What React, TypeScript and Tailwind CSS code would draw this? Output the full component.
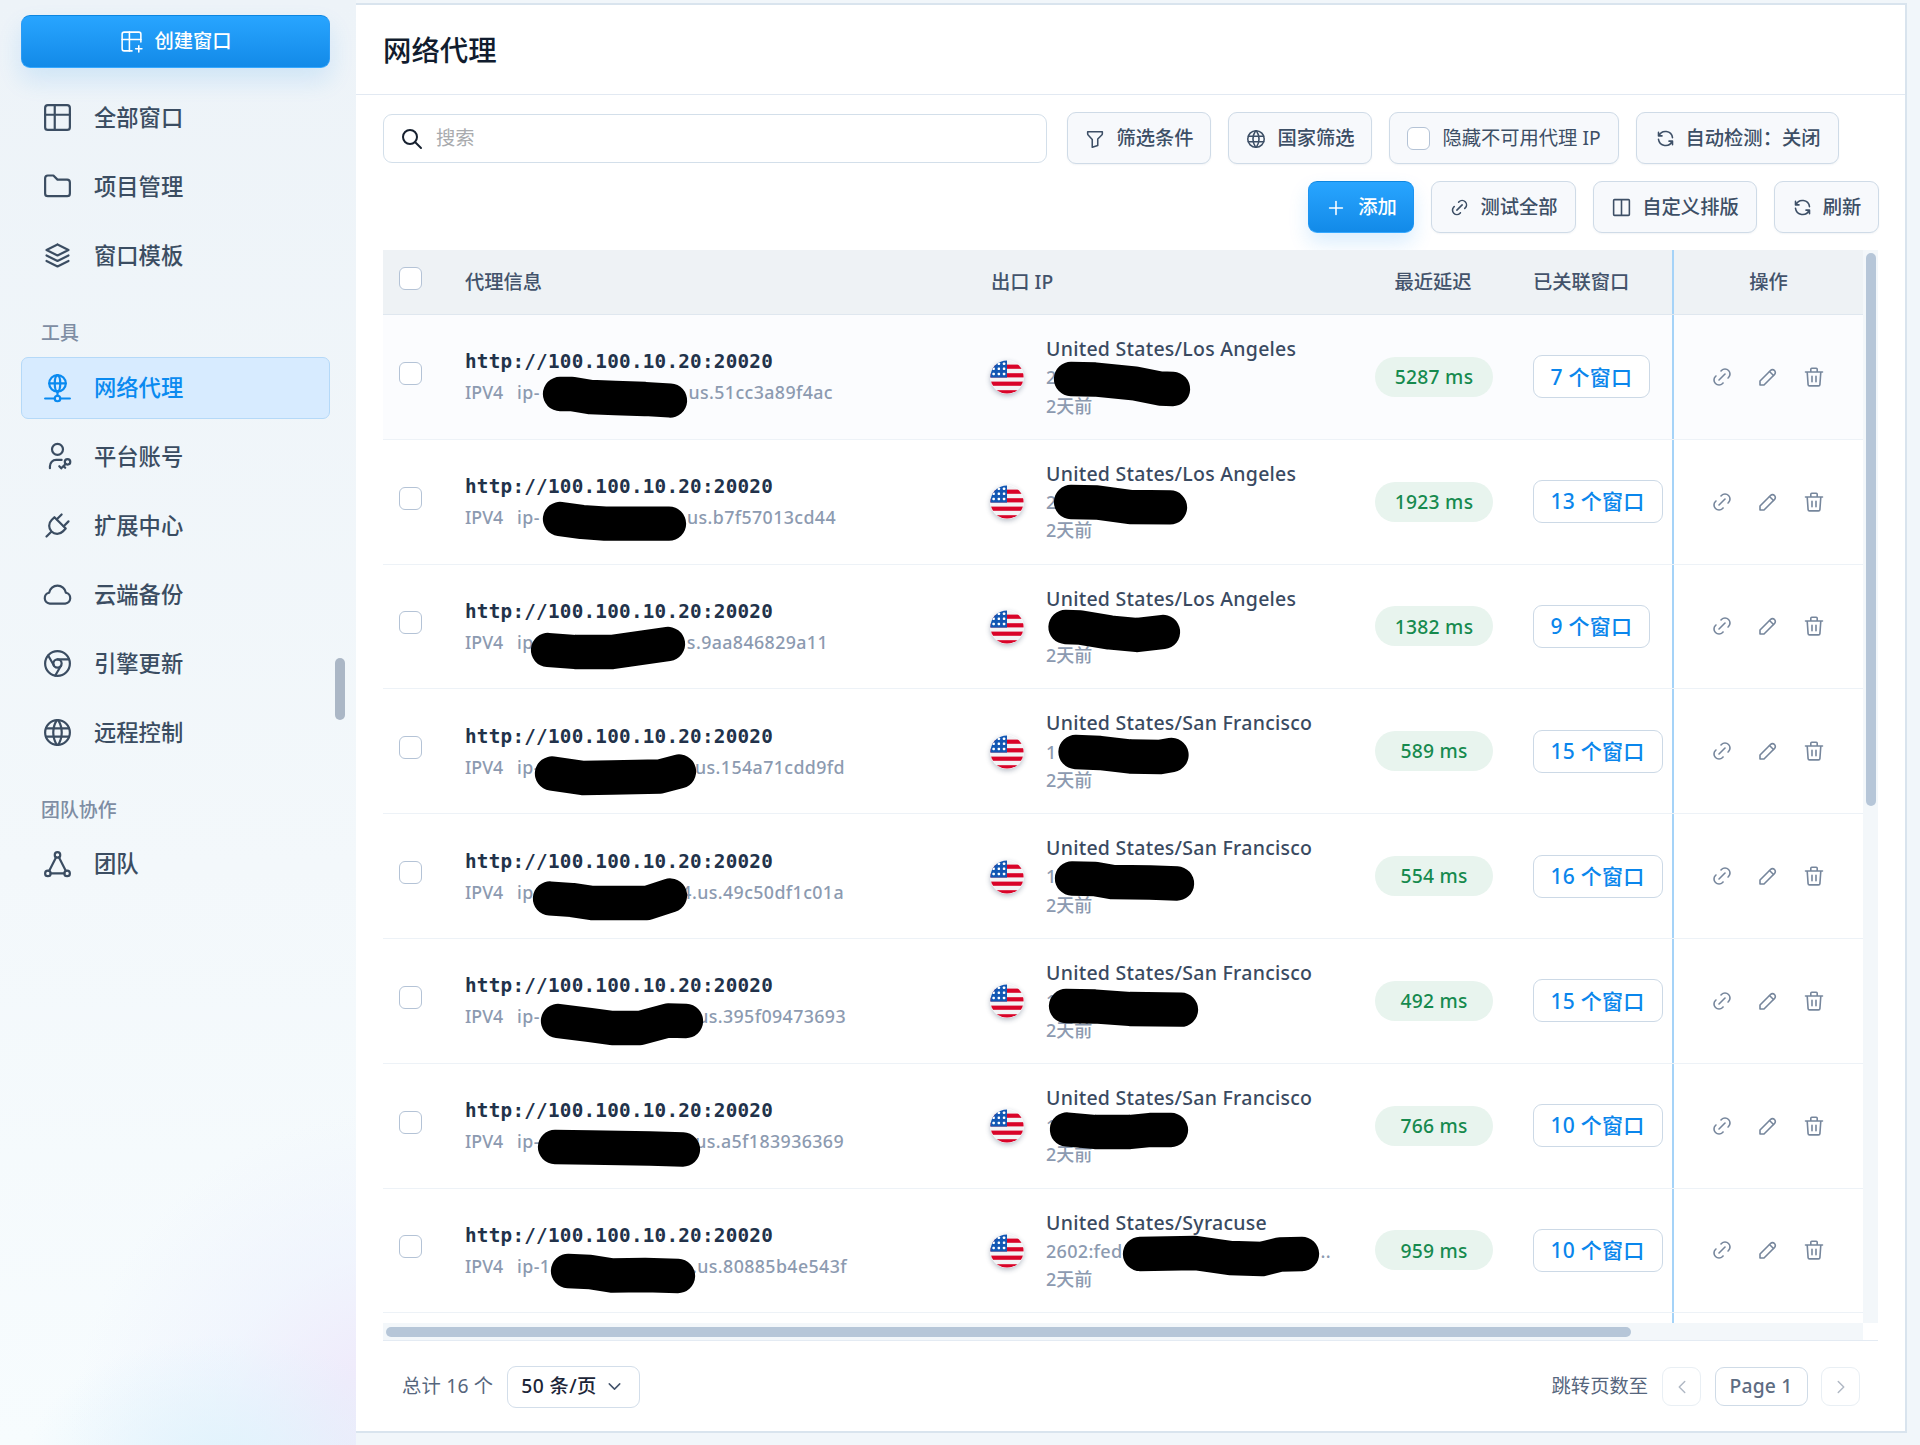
import React from 'react';
import {
  TbBrandChrome, TbChevronDown, TbChevronLeft, TbChevronRight, TbColumns2, TbFilter, TbFolder, TbLink, TbNetwork,
  TbPencil, TbPlug, TbPlus, TbRefresh, TbSearch, TbStack2, TbTable, TbTablePlus, TbWorld,
} from 'react-icons/tb';

const SVG = { viewBox: '0 0 24 24', fill: 'none', stroke: 'currentColor', strokeLinecap: 'round', strokeLinejoin: 'round' } as const;

interface IconProps { size?: number; strokeWidth?: number; className?: string; }

function UserKey({ size = 33 }: IconProps) {
  return <svg {...SVG} width={size} height={size} strokeWidth={1.6}>
    <circle cx="12" cy="6.8" r="4" />
    <path d="M6.5 20.5v-1.5a4.5 4.5 0 0 1 4.5-4.5h4" />
    <circle cx="19.3" cy="15.9" r="2" />
    <path d="M17.9 17.4l-3.2 3.2M16.4 18.9l1.2 1.3M14.7 20.6l-1.4-1.5" />
  </svg>;
}

function CloudIcon({ size = 33 }: IconProps) {
  return <svg {...SVG} width={size} height={size} strokeWidth={1.6}>
    <path d="M6.4 18.6a4 4 0 0 1-.5-7.9a6.2 6.2 0 0 1 12.2 0a4 4 0 0 1-.5 7.9z" />
  </svg>;
}

function TeamIcon({ size = 33 }: IconProps) {
  return <svg {...SVG} width={size} height={size} strokeWidth={1.6}>
    <circle cx="12" cy="5" r="2" /><circle cx="5" cy="18.5" r="2" /><circle cx="19" cy="18.5" r="2" />
    <path d="M7 18.5h10M11 6.8l-5.1 9.9M13 6.8l5.1 9.9" />
  </svg>;
}

function TrashIcon({ size = 24 }: IconProps) {
  return <svg {...SVG} width={size} height={size} strokeWidth={1.6}>
    <path d="M3.5 7h17M5.2 7l.9 12.6a1.4 1.4 0 0 0 1.4 1.3h9a1.4 1.4 0 0 0 1.4-1.3L18.8 7M8.8 7V4.2a1 1 0 0 1 1-1h4.4a1 1 0 0 1 1 1V7M10 11.2v5.6M14 11.2v5.6" />
  </svg>;
}

function Flag() {
  return <div className="size-[34px] shrink-0 rounded-full shadow-[0_2px_5px_rgba(30,50,80,0.3)]">
    <svg width="34" height="34" viewBox="0 0 34 34">
      <clipPath id="flag-round"><circle cx="17" cy="17" r="16.6" /></clipPath>
      <g clipPath="url(#flag-round)">
        <rect width="34" height="34" fill="#f3f3f5" />
        {[4.6, 13.2, 21.6, 30.2].map(y => <rect key={y} y={y} width="34" height="4.2" fill="#d90429" />)}
        <rect width="17" height="17.6" fill="#1257b4" />
        {[2.5, 7.6, 12.7].map(y => [2.4, 7.6, 12.8].map(x => <rect key={x + '-' + y} x={x} y={y} width="2.5" height="2.5" rx="0.8" fill="#fff" />))}
      </g>
    </svg>
  </div>;
}

const MAIN_NAV = [
  { label: '全部窗口', Icon: TbTable },
  { label: '项目管理', Icon: TbFolder },
  { label: '窗口模板', Icon: TbStack2 },
];
const TOOLS = [
  { label: '网络代理', Icon: TbNetwork, active: true },
  { label: '平台账号', Icon: UserKey },
  { label: '扩展中心', Icon: TbPlug },
  { label: '云端备份', Icon: CloudIcon },
  { label: '引擎更新', Icon: TbBrandChrome },
  { label: '远程控制', Icon: TbWorld },
];
const TEAM = [{ label: '团队', Icon: TeamIcon }];

// width = full length of the sub line, the head and the tail sit at its two ends
interface Row { head: string; tail: string; width: number; city: string; ip: string; ipEnd?: string; ms: number; wins: number; }
const ROWS: Row[] = [
  { head: 'ip-', tail: 'us.51cc3a89f4ac', width: 368, city: 'Los Angeles', ip: '2', ms: 5287, wins: 7 },
  { head: 'ip-', tail: 'us.b7f57013cd44', width: 371, city: 'Los Angeles', ip: '2', ms: 1923, wins: 13 },
  { head: 'ip', tail: 's.9aa846829a11', width: 363, city: 'Los Angeles', ip: '', ms: 1382, wins: 9 },
  { head: 'ip-', tail: '.us.154a71cdd9fd', width: 380, city: 'San Francisco', ip: '1', ms: 589, wins: 15 },
  { head: 'ip-', tail: '4.us.49c50df1c01a', width: 379, city: 'San Francisco', ip: '1', ms: 554, wins: 16 },
  { head: 'ip-', tail: 'us.395f09473693', width: 381, city: 'San Francisco', ip: '1', ms: 492, wins: 15 },
  { head: 'ip-', tail: 'us.a5f183936369', width: 379, city: 'San Francisco', ip: '1', ms: 766, wins: 10 },
  { head: 'ip-1', tail: '.us.80885b4e543f', width: 382, city: 'Syracuse', ip: '2602:fed', ipEnd: '..', ms: 959, wins: 10 },
];

// marker strokes over the private parts of the addresses
const STROKES = [
  '560,394 572,394 590,397 615,398 645,399 670,400.5',
  '560,519 582,522 605,523.7 669,523.7',
  '548,650 575,652 612,652 640,648 668,644',
  '552,773.5 583,778 612,777.5 660,776.5 679,771.5',
  '550,898.5 572,900 592,903 647,903 670,895.5',
  '558,1021 590,1025 612,1028 640,1028 668,1020.5 686,1021',
  '555,1147 590,1147.5 650,1148.5 683,1149.5',
  '568,1271 590,1272 612,1275.5 645,1275 678,1276',
  '1071,379 1095,379.5 1135,383.5 1160,388.5 1173,389',
  '1071,502 1097,502.5 1130,507 1170,507.4',
  '1065.5,627 1080,627.5 1110,632.5 1137,635 1163,632',
  '1075.5,752 1100,753 1130,756.5 1160,757 1171.5,755',
  '1072,878.5 1095,879 1112,882 1150,882.5 1177,883.5',
  '1066,1006 1095,1006.5 1130,1009 1181,1009.7',
  '1067,1129.5 1095,1132 1130,1132 1150,1130 1171,1130',
  '1140,1254 1195,1253 1230,1258 1262,1259 1280,1254.5 1302,1254',
];

function Checkbox({ className = '' }: { className?: string }) {
  return <span className={'block size-[23px] shrink-0 rounded-[6px] border-[1.5px] border-[#b4c3d6] bg-white ' + className} />;
}

function NavItem({ label, Icon, active = false }: { label: string; Icon: React.ComponentType<IconProps>; active?: boolean }) {
  return <div className={`flex h-[62px] items-center gap-[20px] rounded-[7px] border-[1.5px] pl-[19px] text-[22.3px] font-medium ${active ? 'border-[#b5d9f8] bg-[#d7ebff] text-[#0a8af0]' : 'border-transparent text-[#3b4d62]'}`}>
    <Icon size={33} strokeWidth={1.6} />
    <span>{label}</span>
  </div>;
}

function ToolButton({ children, className = '' }: { children: React.ReactNode; className?: string }) {
  return <button className={'flex h-[52px] items-center justify-center gap-[10px] rounded-[9px] border-[1.5px] border-[#cfdbe7] bg-[#f7f9fc] pt-[1px] text-[19.3px] text-[#3d4f66] shadow-[0_1px_2px_rgba(30,60,100,0.06)] ' + className}>{children}</button>;
}

export default function App() {
  return <div className="flex h-[1445px] w-[1920px] overflow-hidden bg-[#f1f6fa] font-['Noto_Sans','Noto_Sans_CJK_SC',sans-serif] text-[#33475c]">
    <aside className="relative w-[356px] shrink-0 bg-[radial-gradient(ellipse_200px_130px_at_225px_1465px,#e0f3fc_0,rgba(224,243,252,0)_100%),radial-gradient(circle_at_400px_1440px,#efe9fa_0,#efebfb_80px,rgba(236,240,253,0.55)_190px,rgba(240,245,253,0)_330px),linear-gradient(180deg,#edf3f8_0,#f3f8fb_60%,#f7fcfe_100%)] px-[21px] pt-[14.5px]">
      <button className="flex h-[53px] w-[309px] items-center justify-center gap-[10px] rounded-[9px] border border-t-[#0d86e0] border-x-[#2a9bf5] border-b-[#35a8ff] bg-linear-to-b from-[#28a5ff] to-[#128ae8] pt-[1px] text-[19.3px] font-medium text-white shadow-[0_12px_24px_rgba(24,144,240,0.14)]">
        <TbTablePlus size={25} strokeWidth={1.5} />创建窗口
      </button>
      <nav className="mt-[19px] flex w-[309px] flex-col gap-[7px]">
        {MAIN_NAV.map(n => <NavItem key={n.label} {...n} />)}
      </nav>
      <div className="mt-[32.5px] h-[28px] pl-[20px] text-[18.9px] font-medium leading-[28px] text-[#7e8da3]">工具</div>
      <nav className="mt-[9.5px] flex w-[309px] flex-col gap-[7px]">
        {TOOLS.map(n => <NavItem key={n.label} {...n} />)}
      </nav>
      <div className="mt-[32px] h-[28px] pl-[20px] text-[18.9px] font-medium leading-[28px] text-[#7e8da3]">团队协作</div>
      <nav className="mt-[9.5px] flex w-[309px] flex-col gap-[7px]">
        {TEAM.map(n => <NavItem key={n.label} {...n} />)}
      </nav>
      <div className="absolute left-[335px] top-[658px] h-[62px] w-[10px] rounded-full bg-[#abb7c6]" />
    </aside>

    <main className="mt-[3px] flex h-[1430px] w-[1551px] flex-col border-2 border-l-0 border-[#d9e4ee] bg-white">
      <header className="flex h-[90px] shrink-0 items-center border-b-[1.5px] border-[#e2e9f2] pl-[27px] pt-[2px] text-[28.4px] font-medium text-[#111c2e]">网络代理</header>

      <div className="mt-[17px] flex items-center pl-[27px]">
        <div className="mr-[20px] flex h-[49px] w-[664px] items-center gap-[12px] rounded-[9px] border-[1.5px] border-[#d3dfea] pl-[16px] pt-[1px] text-[19.3px] text-[#a9abae]">
          <TbSearch size={24} strokeWidth={2} className="text-[#16202f]" />搜索
        </div>
        <div className="flex gap-[17px]">
          <ToolButton className="w-[144px] font-medium"><TbFilter size={22} strokeWidth={1.7} />筛选条件</ToolButton>
          <ToolButton className="w-[144px] gap-[8px] font-medium"><TbWorld size={22} strokeWidth={1.7} />国家筛选</ToolButton>
          <ToolButton className="w-[230px] gap-[12px]"><Checkbox />隐藏不可用代理 IP</ToolButton>
          <ToolButton className="w-[203px] font-medium"><TbRefresh size={21} strokeWidth={1.8} />自动检测：关闭</ToolButton>
        </div>
      </div>
      <div className="mt-[17px] flex justify-end gap-[17px] pr-[26px]">
        <button className="flex h-[52px] w-[106px] items-center justify-center gap-[11px] rounded-[9px] border border-t-[#0d86e0] border-x-[#1c94f2] border-b-[#35a8ff] bg-linear-to-b from-[#28a5ff] to-[#128ae8] pt-[1px] text-[19.3px] font-medium text-white shadow-[0_10px_20px_rgba(24,144,240,0.16)]">
          <TbPlus size={22} strokeWidth={1.7} />添加
        </button>
        <ToolButton className="w-[145px] font-medium"><TbLink size={21} strokeWidth={1.8} />测试全部</ToolButton>
        <ToolButton className="w-[164px] font-medium"><TbColumns2 size={21} strokeWidth={1.8} />自定义排版</ToolButton>
        <ToolButton className="w-[105px] font-medium"><TbRefresh size={21} strokeWidth={1.8} />刷新</ToolButton>
      </div>

      <section className="relative ml-[27px] mt-[17px] w-[1495px] border-b-[1.5px] border-[#e4ebf3]">
        <div className="flex h-[1073px]">
          <div className="w-[1480px] overflow-hidden">
            <div className="flex h-[65px] items-center border-b-[1.5px] border-[#dfe7ef] bg-[#eef2f5] text-[19.3px] font-medium text-[#43536b]">
              <div className="w-[82px] pl-[16px]"><Checkbox className="-mt-[8px]" /></div>
              <div className="w-[526px]">代理信息</div>
              <div className="w-[384px]">出口 IP</div>
              <div className="w-[116px] text-center">最近延迟</div>
              <div className="w-[181px] pl-[42px]">已关联窗口</div>
              <div className="flex h-full w-[191px] items-center justify-center border-l-2 border-[#a5d3f8]">操作</div>
            </div>
            {ROWS.map((r, i) => <div key={i} className={`flex h-[124.8px] items-center border-b-[1.5px] border-[#edf2f7] ${i === 0 ? 'bg-[#fbfcfe]' : 'bg-white'}`}>
              <div className="w-[82px] pl-[16px]"><Checkbox className="-mt-[7px]" /></div>
              <div className="w-[525px]">
                <div className="font-['DejaVu_Sans_Mono',monospace] text-[19.3px] font-bold leading-[31px] tracking-[0.24px] text-[#22324a]">http://100.100.10.20:20020</div>
                <div className="flex justify-between text-[17.8px] font-medium leading-[30px] tracking-[0.4px] text-[#8c9ab0]" style={{ width: r.width }}>
                  <span><span className="inline-block w-[52px] tracking-normal">IPV4</span>{r.head}</span>
                  <span>{r.tail}</span>
                </div>
              </div>
              <div className="flex w-[385px] items-center gap-[22px] pt-[1px]">
                <Flag />
                <div className="text-[18px] font-medium leading-[28.3px] text-[#8c9ab0]">
                  <div className="text-[19.5px] tracking-[0.26px] text-[#3a4a61]">United States/{r.city}</div>
                  <div className="flex h-[28.3px] w-[285px] justify-between tracking-[0.3px]"><span>{r.ip}</span><span>{r.ipEnd}</span></div>
                  <div>2天前</div>
                </div>
              </div>
              <div className="flex h-[40px] w-[118px] items-center justify-center rounded-full bg-[#e8f4ee] pt-[1px] text-[19.3px] font-medium tracking-[0.25px] text-[#168a4e]">{r.ms} ms</div>
              <div className="w-[179px] pl-[39.5px]">
                <span className="inline-flex h-[43px] items-center rounded-[9px] border-[1.5px] border-[#ccd9e6] bg-white px-[17px] pt-[1px] text-[21px] font-medium tracking-[0.25px] text-[#0a86ec]">{r.wins} 个窗口</span>
              </div>
              <div className="flex h-full w-[191px] items-center justify-center gap-[22px] border-l-2 border-[#a5d3f8] pr-[2px] text-[#76869c]">
                <TbLink size={24} strokeWidth={1.6} /><TbPencil size={24} strokeWidth={1.6} /><TrashIcon size={24} />
              </div>
            </div>)}
            <div className="ml-[1289px] h-[20px] border-l-2 border-[#a5d3f8]" />
          </div>
          <div className="w-[15px] bg-[#f3f7fa] pl-[3px] pt-[3px]"><div className="h-[553px] w-[10px] rounded-full bg-[#b6c6d8]" /></div>
        </div>
        <div className="h-[17px] w-[1480px] bg-[#f3f7fa] pl-[3px] pt-[4px]"><div className="h-[10px] w-[1245px] rounded-full bg-[#b6c6d8]" /></div>
        <svg className="pointer-events-none absolute left-0 top-0" width="1480" height="1090" viewBox="383 250 1480 1090" fill="none" stroke="#000" strokeWidth="34.3" strokeLinecap="round" strokeLinejoin="round">
          {STROKES.map(p => <polyline key={p} points={p} />)}
        </svg>
      </section>

      <footer className="flex flex-1 items-center pl-[46px] pr-[45px] pt-[1px] text-[19.3px] text-[#56667d]">
        <span className="tracking-[0.2px]">总计 16 个</span>
        <span className="ml-[14px] flex h-[42px] w-[133px] items-center gap-[7px] rounded-[9px] border-[1.5px] border-[#d3deea] pl-[13px] font-medium tracking-[0.4px] text-[#1b2537]">50 条/页<TbChevronDown size={21} strokeWidth={1.7} className="text-[#43536b]" /></span>
        <span className="ml-auto">跳转页数至</span>
        <span className="ml-[14px] flex h-[39px] w-[39px] items-center justify-center rounded-[9px] border-[1.5px] border-[#e9eff4] text-[#b0b8c4]"><TbChevronLeft size={22} strokeWidth={1.6} /></span>
        <span className="ml-[13.5px] flex h-[39px] w-[93px] items-center justify-center rounded-[9px] border-[1.5px] border-[#cfdbe7] font-medium tracking-[0.2px] text-[#5d6c82]">Page 1</span>
        <span className="ml-[13.5px] flex h-[39px] w-[39px] items-center justify-center rounded-[9px] border-[1.5px] border-[#e9eff4] text-[#b0b8c4]"><TbChevronRight size={22} strokeWidth={1.6} /></span>
      </footer>
    </main>
  </div>;
}
